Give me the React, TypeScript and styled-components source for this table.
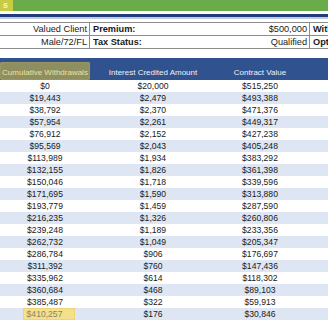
import React from "react";
import styled, { createGlobalStyle } from "styled-components";

const GlobalStyle = createGlobalStyle`
  html, body { margin: 0; padding: 0; background: #ffffff; }
  body { width: 328px; height: 320px; overflow: hidden; font-family: "Liberation Sans", Arial, sans-serif; }
`;

const Page = styled.div`
  width: 328px;
  height: 320px;
  overflow: hidden;
  display: flex;
  flex-direction: column;
`;

const TopBar = styled.div`
  height: 11px;
  background: #6aab4a;
  display: flex;
  flex-shrink: 0;
`;

const Tab = styled.div`
  width: 13px;
  background: #c9cb45;
  color: #f4f6c8;
  font-size: 9px;
  font-weight: bold;
  line-height: 11px;
  display: flex;
  justify-content: flex-end;
  padding-right: 5px;
  box-sizing: border-box;
`;

const Rule = styled.div<{ $h: number; $c: string; $mt?: number }>`
  height: ${(p) => p.$h}px;
  background: ${(p) => p.$c};
  margin-top: ${(p) => p.$mt ?? 0}px;
  flex-shrink: 0;
`;

const InfoTable = styled.div`
  margin-top: 3px;
  display: grid;
  grid-template-columns: 90px 220px 1fr;
  border-top: 1px solid #8c8c8c;
  flex-shrink: 0;
`;

const InfoCell = styled.div<{ $divider?: boolean }>`
  height: 12px;
  border-bottom: 1px solid #8c8c8c;
  border-right: ${(p) => (p.$divider ? "1px solid #8c8c8c" : "none")};
  font-size: 9.2px;
  line-height: 12px;
  color: #1a1a1a;
  display: flex;
  justify-content: space-between;
  padding: 0 2px 0 3px;
  white-space: nowrap;
  overflow: hidden;
`;

const ValueCell = styled(InfoCell)`
  justify-content: flex-end;
`;

const Label = styled.span`
  font-weight: bold;
`;

const Table = styled.div`
  margin-top: 9px;
  display: flex;
  flex-direction: column;
`;

const Row = styled.div`
  display: grid;
  grid-template-columns: 90px 126px 88px 1fr;
`;

const HeadRow = styled(Row)`
  height: 22px;
  background: #30528f;
`;

const HeadCell = styled.div<{ $hl?: boolean }>`
  font-size: 8px;
  color: ${(p) => (p.$hl ? "#ece29c" : "#eef2fa")};
  display: flex;
  align-items: flex-end;
  justify-content: center;
  padding-bottom: 3px;
  white-space: nowrap;
  margin-top: ${(p) => (p.$hl ? "4px" : "0")};
  background: ${(p) => (p.$hl ? "#8f8e60" : "transparent")};
  box-shadow: ${(p) => (p.$hl ? "inset 0 0 2px 0 #b3ab62" : "none")};
  border-radius: ${(p) => (p.$hl ? "2px" : "0")};
`;

const DataRow = styled(Row)<{ $alt: boolean }>`
  height: 12px;
  background: ${(p) => (p.$alt ? "#dde6f2" : "#ffffff")};
`;

const DataCell = styled.div`
  font-size: 8.6px;
  line-height: 12px;
  color: #1a1a1a;
  text-align: center;
  white-space: nowrap;
`;

const Mark = styled.span`
  display: inline-block;
  background: #f3df8c;
  color: #8d8568;
  padding: 0 13px 0 4px;
  margin-left: 8px;
  box-shadow: inset 0 0 0 1px #ecd47a;
`;

const rows: [string, string, string][] = [
  ["$0", "$20,000", "$515,250"],
  ["$19,443", "$2,479", "$493,388"],
  ["$38,792", "$2,370", "$471,376"],
  ["$57,954", "$2,261", "$449,317"],
  ["$76,912", "$2,152", "$427,238"],
  ["$95,569", "$2,043", "$405,248"],
  ["$113,989", "$1,934", "$383,292"],
  ["$132,155", "$1,826", "$361,398"],
  ["$150,046", "$1,718", "$339,596"],
  ["$171,695", "$1,590", "$313,880"],
  ["$193,779", "$1,459", "$287,590"],
  ["$216,235", "$1,326", "$260,806"],
  ["$239,248", "$1,189", "$233,356"],
  ["$262,732", "$1,049", "$205,347"],
  ["$286,784", "$906", "$176,697"],
  ["$311,392", "$760", "$147,436"],
  ["$335,962", "$614", "$118,302"],
  ["$360,684", "$468", "$89,103"],
  ["$385,487", "$322", "$59,913"],
  ["$410,257", "$176", "$30,846"],
];

export default function App() {
  return (
    <Page>
      <GlobalStyle />
      <TopBar>
        <Tab>s</Tab>
      </TopBar>
      <Rule $h={3} $c="#1f3d7a" $mt={3} />
      <Rule $h={2} $c="#c3cbdc" />
      <InfoTable>
        <ValueCell $divider>Valued Client</ValueCell>
        <InfoCell $divider>
          <Label>Premium:</Label>
          <span>$500,000</span>
        </InfoCell>
        <InfoCell>
          <Label>Withdrawals:</Label>
        </InfoCell>
        <ValueCell $divider>Male/72/FL</ValueCell>
        <InfoCell $divider>
          <Label>Tax Status:</Label>
          <span>Qualified</span>
        </InfoCell>
        <InfoCell>
          <Label>Option:</Label>
        </InfoCell>
      </InfoTable>
      <Table>
        <HeadRow>
          <HeadCell $hl>Cumulative Withdrawals</HeadCell>
          <HeadCell>Interest Credited Amount</HeadCell>
          <HeadCell>Contract Value</HeadCell>
          <HeadCell />
        </HeadRow>
        {rows.map((r, i) => (
          <DataRow key={i} $alt={i % 2 === 1}>
            <DataCell>{i === rows.length - 1 ? <Mark>{r[0]}</Mark> : r[0]}</DataCell>
            <DataCell>{r[1]}</DataCell>
            <DataCell>{r[2]}</DataCell>
            <DataCell />
          </DataRow>
        ))}
      </Table>
    </Page>
  );
}
